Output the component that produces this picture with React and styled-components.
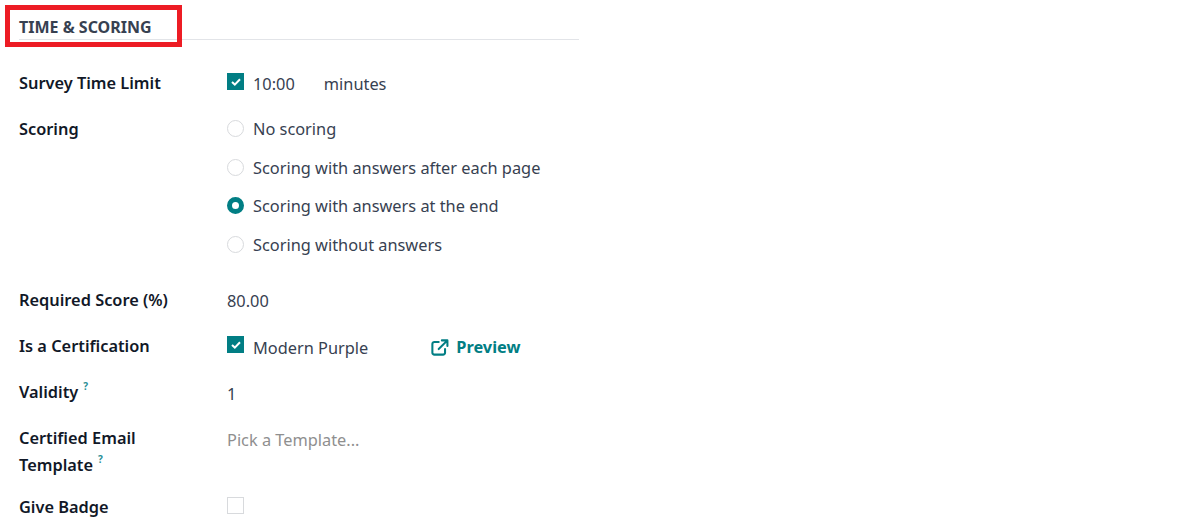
import React from "react";
import styled, { createGlobalStyle } from "styled-components";

const Global = createGlobalStyle`
  html, body { margin: 0; padding: 0; background: #fff; }
  body { font-family: "Noto Sans", "Open Sans", sans-serif; color: #374151; }
`;
const Page = styled.div`
  width: 1197px; height: 531px; overflow: hidden; box-sizing: border-box;
  padding: 5px 0 0 19px; background: #fff;
`;
const Section = styled.section`width: 560px;`;
const Head = styled.div`
  height: 34px; border-bottom: 1px solid #e2e4e8; position: relative;
`;
const Marker = styled.div`
  position: absolute; left: -14px; top: 0; width: 177px; height: 42px; box-sizing: border-box;
  border: 5px solid #ed1c24; display: flex; align-items: center; padding-left: 9px;
`;
const HeadText = styled.h2`
  margin: 2px 0 0; font-size: 16px; font-weight: 700; color: #374151; line-height: 30px;
`;
const Form = styled.div`padding: 30px 0 0 0;`;
const Row = styled.div`
  display: grid; grid-template-columns: 208px 1fr; margin-bottom: ${p => p.$mb}px; min-height: 27px; align-items: start;
`;
const Label = styled.div`
  font-size: 16.35px; line-height: 27px; font-weight: 600; color: #111827; width: 170px;
`;
const Help = styled.sup`
  font-size: 10px; font-weight: 700; color: #2a8f96; margin-left: 5px; line-height: 0; position: relative; top: -2px;
`;
const Value = styled.div`
  font-size: 16.35px; line-height: 27px; color: #374151; display: flex; align-items: center;
  margin-top: ${p => p.$mt || 0}px;
`;
const Muted = styled(Value)`color: #8f8f8f;`;
const Check = styled.span`
  width: 17px; height: 17px; box-sizing: border-box; flex: none; margin-right: 9px; position: relative;
  top: ${p => p.$top}px;
  background: ${p => p.$on ? "#017e84" : "#fff"}; border: 1px solid ${p => p.$on ? "#017e84" : "#d8dadd"};
  display: inline-flex; align-items: center; justify-content: center;
`;
const Radios = styled.div`display: flex; flex-direction: column; gap: 11.7px;`;
const Radio = styled.span`
  width: 17px; height: 17px; box-sizing: border-box; border-radius: 50%; flex: none; margin-right: 9px; position: relative; top: -1px;
  background: #fff; border: ${p => p.$on ? "5px solid #017e84" : "1px solid #d8dadd"};
`;
const Gap = styled.span`width: ${p => p.$w}px; flex: none;`;
const Link = styled.span`
  color: #017e84; font-weight: 700; display: inline-flex; align-items: center; gap: 7px; position: relative; top: -1px;
`;
const Tick = () => (
  <svg width="10" height="8" viewBox="0 0 10 8" fill="none"><path d="M1 4 3.8 6.6 9 1.2" stroke="#fff" strokeWidth="2" /></svg>
);
const External = () => (
  <svg width="19" height="19" viewBox="0 0 24 24" fill="none" stroke="#017e84" strokeWidth="2.6" strokeLinecap="round" strokeLinejoin="round">
    <path d="M11 5H5.5A2.5 2.5 0 0 0 3 7.5v11A2.5 2.5 0 0 0 5.5 21h11a2.5 2.5 0 0 0 2.5-2.5V14" />
    <path d="M15 3h7v7M22 3 11 14" />
  </svg>
);

export default function App() {
  return (
    <Page>
      <Global />
      <Section>
        <Head><Marker><HeadText>TIME &amp; SCORING</HeadText></Marker></Head>
        <Form>
          <Row $mb={18}>
            <Label>Survey Time Limit</Label>
            <Value $mt={1}><Check $on $top={-3}><Tick /></Check>10:00<Gap $w={29} />minutes</Value>
          </Row>
          <Row $mb={28}>
            <Label>Scoring</Label>
            <Radios>
              <Value><Radio />No scoring</Value>
              <Value><Radio />Scoring with answers after each page</Value>
              <Value><Radio $on />Scoring with answers at the end</Value>
              <Value><Radio />Scoring without answers</Value>
            </Radios>
          </Row>
          <Row $mb={18}>
            <Label>Required Score (%)</Label>
            <Value $mt={1}>80.00</Value>
          </Row>
          <Row $mb={17}>
            <Label>Is a Certification</Label>
            <Value $mt={2}><Check $on $top={-4}><Tick /></Check>Modern Purple<Gap $w={62} /><Link><External />Preview</Link></Value>
          </Row>
          <Row $mb={17}>
            <Label>Validity<Help>?</Help></Label>
            <Value $mt={2}>1</Value>
          </Row>
          <Row $mb={15}>
            <Label>Certified Email Template<Help>?</Help></Label>
            <Muted $mt={2}>Pick a Template...</Muted>
          </Row>
          <Row $mb={0}>
            <Label>Give Badge</Label>
            <Value $mt={2}><Check $top={1} /></Value>
          </Row>
        </Form>
      </Section>
    </Page>
  );
}
